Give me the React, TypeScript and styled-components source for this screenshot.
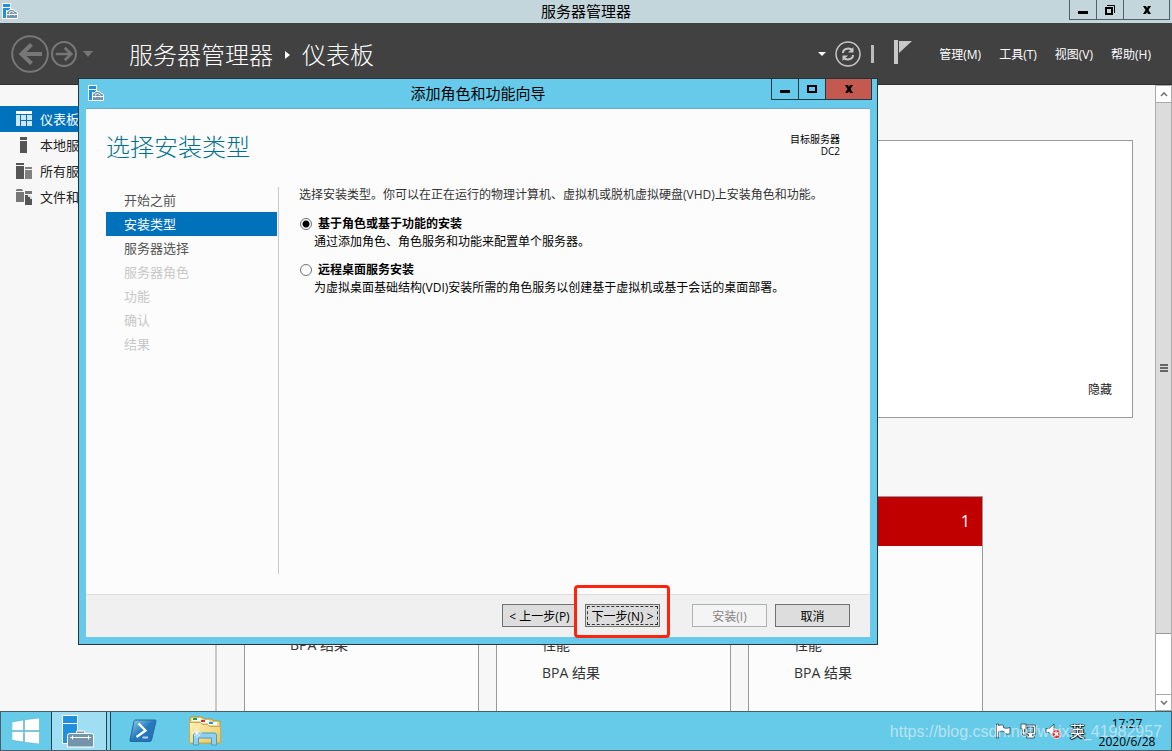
import React from "react";
import styled, { createGlobalStyle, css } from "styled-components";

const uiFont = `"Open Sans", "Noto Sans CJK SC", sans-serif`;

const GlobalStyle = createGlobalStyle`
  * { box-sizing: border-box; }
  body { margin: 0; font-family: ${uiFont}; font-size: 12px; color: #000; overflow: hidden; }
  button, input { font-family: inherit; margin: 0; }
  h1, h2, p, ul { margin: 0; padding: 0; font-weight: 400; }
  ul { list-style: none; }
`;

const Desktop = styled.div`
  position: relative;
  display: flex;
  flex-direction: column;
  height: 100vh;
  background: #f7f7f7;
  overflow: hidden;
`;

/* ---------- window chrome ---------- */

const TitleBar = styled.header`
  display: grid;
  grid-template-columns: 1fr auto 1fr;
  height: 23px;
  flex: none;
  padding: 0 2px;
  background: #c3d6dc;
`;

const WindowTitle = styled.h1`
  font-size: 15px;
  line-height: 22px;
`;

const TitleIcon = styled.span`
  display: flex;
  align-items: flex-start;
  padding-top: 3px;
`;

const Controls = styled.div`
  display: flex;
  justify-content: flex-end;
`;

const ControlButton = styled.button<{ $wide?: boolean; $tone?: "frame" | "danger" }>`
  display: flex;
  align-items: center;
  justify-content: center;
  width: ${(p) => (p.$wide ? 47 : 28)}px;
  height: ${(p) => (p.$tone ? 21 : 20)}px;
  padding: 0;
  margin-left: -1px;
  border: 1px solid ${(p) => (p.$tone ? "#1f3a46" : "#53606b")};
  border-top: 0;
  background: ${(p) => (p.$tone === "danger" ? "#c3594f" : "transparent")};
`;

const NavBar = styled.div`
  display: flex;
  align-items: center;
  justify-content: space-between;
  height: 62px;
  flex: none;
  padding: 0 21px 0 11px;
  background: #414141;
  border-bottom: 1px solid #2f2f2f;
  color: #fff;
`;

const NavGroup = styled.div`
  display: flex;
  align-items: center;
`;

const IconButton = styled.button<{ $gap?: number }>`
  display: flex;
  padding: 0;
  margin-right: ${(p) => p.$gap ?? 0}px;
  border: 0;
  background: none;
`;

const Breadcrumb = styled.div`
  display: flex;
  align-items: center;
  gap: 12px;
  padding-top: 2px;
  font-size: 24px;
  line-height: 36px;
  font-weight: 300;
`;

const MenuBar = styled.nav`
  display: flex;
  gap: 18px;
  padding-top: 2px;
`;

const MenuButton = styled.button`
  padding: 0;
  border: 0;
  background: none;
  color: #fff;
  font-size: 12px;
  line-height: 18px;
  white-space: nowrap;
`;

/* ---------- dashboard behind the wizard ---------- */

const Body = styled.div`
  display: flex;
  flex: 1;
  min-height: 0;
`;

const Sidebar = styled.nav`
  width: 217px;
  flex: none;
  padding-top: 21px;
  border-right: 2px solid #c8c8c8;
`;

const SideLink = styled.a<{ $active?: boolean }>`
  display: flex;
  align-items: center;
  gap: 7px;
  height: 26px;
  padding-left: 16px;
  font-size: 13px;
  text-decoration: none;
  color: ${(p) => (p.$active ? "#fff" : "#222")};
  background: ${(p) => (p.$active ? "#0072bc" : "transparent")};
`;

const SideLabel = styled.span`
  padding-bottom: 2px;
`;

const Content = styled.main`
  display: flex;
  flex-direction: column;
  flex: 1;
  min-width: 0;
  gap: 78px;
  padding: 55px 22px 0 27px;
  overflow: hidden;
`;

const WelcomePanel = styled.section`
  display: flex;
  justify-content: flex-end;
  align-items: flex-end;
  height: 278px;
  flex: none;
  padding: 18px 20px;
  background: #fff;
  border: 1px solid #999;
`;

const HideButton = styled.button`
  padding: 0;
  border: 0;
  background: none;
  font-size: 12px;
  line-height: 18px;
  color: #222;
`;

const Tiles = styled.div`
  display: flex;
  gap: 17px;
  flex: 1;
`;

const Tile = styled.section`
  width: 235px;
  flex: none;
  background: #fcfcfc;
  border: 1px solid #999;
  border-bottom: 0;
`;

const TileHead = styled.div`
  height: 49px;
  padding-right: 12px;
  text-align: right;
  font-size: 16px;
  line-height: 49px;
  color: #fff;
  background: #c00000;
`;

const TileRows = styled.ul`
  padding: 85px 0 0 45px;
  font-size: 14px;
  line-height: 28px;
  color: #333;
`;

const ScrollTrack = styled.div`
  display: flex;
  flex-direction: column;
  width: 17px;
  flex: none;
  border: 1px solid #ababab;
  border-bottom: 0;
  background: #fff;
`;

const ScrollButton = styled.button`
  display: flex;
  align-items: center;
  justify-content: center;
  height: 17px;
  padding: 0;
  border: 0;
  background: #fff;
  border-bottom: 1px solid #ababab;
  &:last-child { border-top: 1px solid #ababab; }
`;

const ScrollThumb = styled.div`
  display: flex;
  flex-direction: column;
  align-items: center;
  justify-content: center;
  gap: 1px;
  flex: 531;
  background: #dcdcdc;
  border-bottom: 1px solid #999;
`;

const Grip = styled.i`
  width: 8px;
  height: 2px;
  background: #666;
`;

const ScrollRest = styled.div`
  flex: 60;
`;

/* ---------- wizard ---------- */

const Wizard = styled.section`
  position: absolute;
  left: 78px;
  top: 78px;
  width: 800px;
  height: 567px;
  display: flex;
  flex-direction: column;
  padding: 0 7px 7px;
  background: #68caeb;
  border: 1px solid #28333a;
`;

const WizardBar = styled.header`
  display: grid;
  grid-template-columns: 1fr auto 1fr;
  height: 29px;
  flex: none;
`;

const WizardControls = styled(Controls)`
  margin-right: -2px;
`;

const WizardIcon = styled(TitleIcon)`
  padding: 6px 0 0 2px;
`;

const WizardTitle = styled.h2`
  font-size: 15px;
  line-height: 28px;
`;

const WizardPage = styled.div`
  display: flex;
  flex-direction: column;
  flex: 1;
  min-height: 0;
  background: #fcfcfc;
  border-top: 1px solid #78a9c9;
`;

const WizardHead = styled.div`
  display: flex;
  justify-content: space-between;
  height: 78px;
  padding: 20px 30px 0 20px;
`;

const PageTitle = styled.h2`
  font-size: 24px;
  line-height: 36px;
  font-weight: 300;
  color: #00708f;
`;

const Target = styled.div`
  padding-top: 4px;
  text-align: right;
  font-size: 10px;
  line-height: 12px;
`;

const WizardBody = styled.div`
  display: flex;
  flex: 1;
  padding: 0 20px 20px;
`;

const Steps = styled.ul`
  width: 173px;
  flex: none;
  padding-right: 1px;
  border-right: 1px solid #c8c8c8;
  padding-top: 1px;
`;

const Step = styled.li<{ $state?: "active" | "disabled" }>`
  height: 24px;
  padding-left: 18px;
  font-size: 13px;
  line-height: 24px;
  color: #555;
  ${(p) => p.$state === "active" && css`color: #fff; background: #0072bc;`}
  ${(p) => p.$state === "disabled" && css`color: #c8c8c8;`}
`;

const Form = styled.div`
  padding-left: 20px;
  line-height: 18px;
`;

const Intro = styled.p`
  margin-bottom: 12px;
  line-height: 16px;
  color: #333;
`;

const Option = styled.div`
  margin-bottom: 10px;
`;

const OptionLabel = styled.label`
  display: flex;
  align-items: center;
  gap: 6px;
  padding-left: 1px;
  font-weight: 700;
`;

const Radio = styled.input`
  appearance: none;
  width: 12px;
  height: 12px;
  border: 1px solid #707070;
  border-radius: 50%;
  background: #fff;
  &:checked { background: radial-gradient(circle, #000 0 3px, #fff 4px); }
`;

const OptionText = styled.p`
  padding-left: 15px;
`;

const Footer = styled.footer`
  display: flex;
  justify-content: flex-end;
  height: 43px;
  flex: none;
  padding: 9px 20px 0 0;
  background: #f0f0f0;
  border-top: 1px solid #dcdcdc;
`;

const PushButton = styled.button<{ $gap?: number; $focused?: boolean }>`
  width: 75px;
  height: 23px;
  padding: 2px 0 0;
  margin-left: ${(p) => p.$gap ?? 8}px;
  border: 1px solid #707070;
  background: #ddd;
  color: #000;
  font-size: 12px;
  line-height: 18px;
  white-space: nowrap;
  ${(p) => p.$focused && css`outline: 1px dashed #333; outline-offset: -3px;`}
  &:disabled { color: #838383; border-color: #adb2b5; background: #f4f4f4; }
`;

const Highlight = styled.div`
  position: absolute;
  right: 207px;
  bottom: 6px;
  width: 96px;
  height: 53px;
  border: 3px solid #ff2410;
  border-radius: 4px;
  pointer-events: none;
`;

/* ---------- taskbar ---------- */

const Taskbar = styled.footer`
  position: relative;
  display: flex;
  justify-content: space-between;
  height: 40px;
  flex: none;
  background: #66cae9;
  border: 1px solid #4d5d66;
`;

const TaskGroup = styled.div`
  display: flex;
`;

const TaskButton = styled.button<{ $width: number; $active?: boolean }>`
  display: flex;
  align-items: center;
  justify-content: center;
  width: ${(p) => p.$width}px;
  padding: 0;
  border: 0;
  background: transparent;
  ${(p) =>
    p.$active &&
    css`
      padding-right: 5px;
      background: linear-gradient(90deg, #a0def3 54px, #23444f 54px 55px, #8dd6ef 55px);
      border: solid #23444f;
      border-width: 0 1px;
    `}
`;

const Tray = styled.div`
  display: flex;
  align-items: center;
  gap: 8px;
  padding-right: 14px;
`;

const Language = styled.span`
  font-size: 15px;
  line-height: 20px;
  color: #fff;
  text-shadow: 0 0 1px #000, 1px 0 1px #000, 0 1px 1px #000, -1px 0 1px #000;
`;

const Clock = styled.time`
  width: 60px;
  margin-left: 4px;
  padding-top: 3px;
  text-align: center;
  white-space: nowrap;
  font-size: 12px;
  line-height: 18px;
`;

const Watermark = styled.span`
  position: absolute;
  right: 9px;
  top: 10px;
  font-family: "Liberation Sans", sans-serif;
  font-size: 16px;
  line-height: 20px;
  color: rgba(235, 245, 250, 0.62);
  white-space: nowrap;
`;

/* ---------- drawings ---------- */

const ServerManagerIcon = ({ size = 16 }: { size?: number }) => (
  <svg width={size} height={size} viewBox="0 0 16 16" aria-hidden="true">
    <path d="M0 0h9v6h-4v10H0z" fill="#fff" />
    <path d="M1 1h7v3H1zM1 5h7v2H4v8H1z" fill="#1f8fdf" />
    <path d="M4.500 9.500l2-1.500 1-1.500h4l1 1.500 3 1.500v6h-11z" fill="#7693ab" stroke="#fff" />
    <path d="M7 9.500q2.500-2 5 0M5 11.500h10M7.500 10.500v2M12.500 10.500v2" fill="none" stroke="#fff" />
  </svg>
);

const TaskServerIcon = () => (
  <svg width="33" height="33" viewBox="0 0 33 33" aria-hidden="true">
    <path d="M.5.500h15v28H.500z" fill="#1f8fdf" stroke="#fff" />
    <path d="M.5 8.500h15" stroke="#fff" />
    <path d="M14.500 18.500v-2.500h8v2.500h7q2 0 2 2v11.500h-26V20.500q0-2 2-2z" fill="#7494aa" stroke="#fff" strokeLinejoin="round" />
    <path d="M15 18.500h7M8 22.500h21M10.500 20.500v4M26.500 20.500v4" stroke="#fff" fill="none" />
  </svg>
);

const Minimise = () => (
  <svg width="14" height="14" viewBox="0 0 14 14" aria-hidden="true"><path d="M2 8h10v3H2z" /></svg>
);
const Maximise = () => (
  <svg width="14" height="14" viewBox="0 0 14 14" aria-hidden="true">
    <path d="M3 4h8v6H3z" fill="none" stroke="#000" strokeWidth="2" />
  </svg>
);
const Restore = () => (
  <svg width="14" height="14" viewBox="0 0 14 14" aria-hidden="true">
    <path d="M3 5h6v6H3z" fill="none" stroke="#000" strokeWidth="2" />
    <path d="M4 2.500h7.500V10" fill="none" stroke="#000" />
  </svg>
);
const Close = () => (
  <svg width="14" height="14" viewBox="0 0 14 14" aria-hidden="true">
    <path d="M3 3h3l1 2 1-2h3l-2.500 4 2.500 4H8L7 9l-1 2H3l2.500-4z" />
  </svg>
);

const RoundArrow = ({ size, flip }: { size: number; flip?: boolean }) => (
  <svg width={size} height={size} viewBox="0 0 38 38" fill="none" stroke="#777" aria-hidden="true">
    <circle cx="19" cy="19" r={flip ? 17.5 : 17.8} strokeWidth={flip ? 3 : 2} />
    {flip ? (
      <path d="M7 19h23M20 10l9.500 9-9.500 9" strokeWidth="4" />
    ) : (
      <path d="M31 19H10M20.500 9.500L10.500 19l10 9.500" strokeWidth="4" />
    )}
  </svg>
);

const Triangle = ({ w, h, fill }: { w: number; h: number; fill: string }) => (
  <svg width={w} height={h} viewBox="0 0 10 6" preserveAspectRatio="none" aria-hidden="true">
    <path d="M0 0h10L5 6z" fill={fill} />
  </svg>
);

const Refresh = () => (
  <svg width="26" height="26" viewBox="0 0 26 26" fill="none" stroke="#c8c8c8" aria-hidden="true">
    <circle cx="13" cy="13" r="12" strokeWidth="1.500" />
    <path d="M8 12c0-5 7-5.500 9.500-2.500M18 14c0 5-7 5.500-9.500 2.500" strokeWidth="2" />
    <path d="M18.500 6v5.500H13zM7.500 20v-5.500H13z" fill="#c8c8c8" stroke="none" />
  </svg>
);

const Chevron = ({ down }: { down?: boolean }) => (
  <svg width="8" height="6" viewBox="0 0 8 6" fill="none" stroke="#777" strokeWidth="1.600" aria-hidden="true">
    <path d={down ? "M1 1l3 3 3-3" : "M1 5l3-3 3 3"} />
  </svg>
);

const sideIcons = [
  <g key="a">
    <path d="M0 0h16v3H0z" fill="#fff" />
    <path d="M0 4h4v11H0zM5 4h5v5H5zM11 4h5v5h-5zM5 10h5v5H5zM11 10h5v5h-5z" fill="#cfe6f5" />
  </g>,
  <path key="b" d="M4 0h7v3H4zM4 4h7v12H4z" fill="#555" />,
  <g key="c">
    <path d="M0 0h8v2H0zM0 3h8v13H0z" fill="#555" />
    <path d="M9 4h7v2H9zM9 7h7v9H9z" fill="#808080" />
  </g>,
  <g key="d">
    <path d="M0 1l1-1h5l1 2h-7zM0 3h8v10H0zM9 2h7v3H9z" fill="#777" />
    <path d="M9 6h4l3 3v7H9z" fill="#555" />
    <path d="M12 6h2l2 2v2h-2V8h-2z" fill="#ddd" />
  </g>,
];

const StartLogo = () => (
  <svg width="28" height="26" viewBox="0 0 28 26" fill="#fff" stroke="#4aa6c3" strokeWidth=".5" aria-hidden="true">
    <path d="M0 4l11.500-2v10.500H0zM12.500 1.800L27.500 0v12.500h-15zM0 13.500h11.500V24L0 22.300zM12.500 13.500h15V26l-15-1.800z" />
  </svg>
);

const PowerShellIcon = () => (
  <svg width="28" height="24" viewBox="0 0 28 24" aria-hidden="true">
    <defs>
      <linearGradient id="ps" x1="0" y1="0" x2="1" y2="1">
        <stop offset="0" stopColor="#9bd4ee" />
        <stop offset=".5" stopColor="#2479bd" />
        <stop offset="1" stopColor="#2a6cc0" />
      </linearGradient>
    </defs>
    <path d="M6.500 1h19.500q1.200 0 1 1.200L22.500 21q-.4 1.500-2 1.500H2q-1.500 0-1-1.500L5 2.300Q5.300 1 6.500 1z" fill="url(#ps)" stroke="#216b9c" />
    <path d="M9.500 4.500l7 7-9 6.500" fill="none" stroke="#fff" strokeWidth="2.400" />
    <path d="M13.500 18.500H19" stroke="#b5d5ed" strokeWidth="2" />
  </svg>
);

const ExplorerIcon = () => (
  <svg width="34" height="30" viewBox="0 0 34 30" aria-hidden="true">
    <defs>
      <linearGradient id="folder" x1="0" y1="0" x2="1" y2="1">
        <stop offset="0" stopColor="#fff3b8" />
        <stop offset="1" stopColor="#e8c65a" />
      </linearGradient>
    </defs>
    <path d="M2 27V2q0-1 1-1h11l2 2h8l1 2h7v22z" fill="#efd98c" stroke="#bd9639" />
    <path d="M4 2h9v3H4z" fill="#fff" /><path d="M5 2h4v2H5z" fill="#18a528" />
    <path d="M12 4h9v3h-9z" fill="#fff" /><path d="M13 4h4v2h-4z" fill="#c73b28" />
    <path d="M20 6h9v3h-9z" fill="#fff" /><path d="M21 6h4v2h-4z" fill="#2293d8" />
    <path d="M1.500 6.500h11l2 2h5l2 2h11V27h-31z" fill="url(#folder)" stroke="#d0a84b" />
    <path d="M5.500 29V19q0-2 2-2h19q2 0 2 2v10h-5v-7h-13v7z" fill="#8fd0ee" stroke="#4a9cc9" />
    <path d="M9 12v10M4 17h10M6 14l6 6M12 14l-6 6" stroke="#fff" strokeWidth=".8" />
  </svg>
);

const TrayIcon = ({ kind }: { kind: "flag" | "net" | "sound" }) => (
  <svg width="17" height="16" viewBox="0 0 17 16" stroke="#243f4b" strokeWidth=".8" fill="#fff" aria-hidden="true">
    {kind === "flag" && <path d="M1.500 1h2v1.500c2-1 4-.5 5 .2v2c2 1 4 .5 6.500-.2v6c-2 1-4 .6-5.500-.3v-1.500c-2-.7-4-.5-6 0V15h-2z" />}
    {kind === "net" && (
      <>
        <path d="M5 2h10.500v9.500h-3V13h2v2h-8v-2h2v-1.500H5z" />
        <path d="M7 4h6.500v5.500H7z" fill="#5fb7d6" />
        <path d="M1 1h5v5H4.500v4H7v2H2.500V6H1z" />
      </>
    )}
    {kind === "sound" && (
      <>
        <path d="M1 5.500h3L9 1v13l-5-4.500H1z" />
        <circle cx="11.500" cy="11" r="4.500" fill="#d92c2c" stroke="#fff" />
        <path d="M9.700 9.200l3.600 3.600M13.300 9.200l-3.600 3.600" stroke="#fff" strokeWidth="1.400" />
      </>
    )}
  </svg>
);

/* ---------- page ---------- */

const sideItems = ["仪表板", "本地服务器", "所有服务器", "文件和存储服务"];
const menus = ["管理(M)", "工具(T)", "视图(V)", "帮助(H)"];
const steps: { label: string; state?: "active" | "disabled" }[] = [
  { label: "开始之前" },
  { label: "安装类型", state: "active" },
  { label: "服务器选择" },
  { label: "服务器角色", state: "disabled" },
  { label: "功能", state: "disabled" },
  { label: "确认", state: "disabled" },
  { label: "结果", state: "disabled" },
];
const options = [
  { id: "role", label: "基于角色或基于功能的安装", text: "通过添加角色、角色服务和功能来配置单个服务器。" },
  { id: "rds", label: "远程桌面服务安装", text: "为虚拟桌面基础结构(VDI)安装所需的角色服务以创建基于虚拟机或基于会话的桌面部署。" },
];
const tiles = [
  { id: 1, rows: ["BPA 结果"] },
  { id: 2, rows: ["性能", "BPA 结果"] },
  { id: 3, rows: ["性能", "BPA 结果"], count: 1 },
];

export default function App() {
  return (
    <Desktop>
      <GlobalStyle />
      <TitleBar>
        <TitleIcon><ServerManagerIcon /></TitleIcon>
        <WindowTitle>服务器管理器</WindowTitle>
        <Controls>
          <ControlButton aria-label="最小化"><Minimise /></ControlButton>
          <ControlButton aria-label="还原"><Restore /></ControlButton>
          <ControlButton aria-label="关闭" $wide><Close /></ControlButton>
        </Controls>
      </TitleBar>

      <NavBar>
        <NavGroup>
          <IconButton aria-label="后退" $gap={2}><RoundArrow size={38} /></IconButton>
          <IconButton aria-label="前进" $gap={6}><RoundArrow size={26} flip /></IconButton>
          <IconButton aria-label="历史记录" $gap={36}><Triangle w={10} h={6} fill="#777" /></IconButton>
          <Breadcrumb>
            <span>服务器管理器</span>
            <svg width="5" height="8" viewBox="0 0 5 8" aria-hidden="true"><path d="M0 0l5 4-5 4z" fill="#fff" /></svg>
            <span>仪表板</span>
          </Breadcrumb>
        </NavGroup>
        <NavGroup>
          <IconButton aria-label="更多" $gap={9}><Triangle w={8} h={4} fill="#fff" /></IconButton>
          <IconButton aria-label="刷新" $gap={10}><Refresh /></IconButton>
          <IconButton as="span" $gap={20}>
            <svg width="3" height="18" aria-hidden="true"><path d="M0 0h3v18H0z" fill="#bbb" /></svg>
          </IconButton>
          <IconButton aria-label="通知" $gap={27}>
            <svg width="18" height="28" viewBox="0 0 18 28" fill="#c8c8c8" aria-hidden="true">
              <path d="M0 0h4v24H0zM5 1h13L5 13z" />
            </svg>
          </IconButton>
          <MenuBar>
            {menus.map((m) => <MenuButton key={m}>{m}</MenuButton>)}
          </MenuBar>
        </NavGroup>
      </NavBar>

      <Body>
        <Sidebar>
          {sideItems.map((label, i) => (
            <SideLink key={label} href="#" $active={i === 0}>
              <svg width="17" height="16" viewBox="0 0 17 16" aria-hidden="true">{sideIcons[i]}</svg>
              <SideLabel>{label}</SideLabel>
            </SideLink>
          ))}
        </Sidebar>
        <Content>
          <WelcomePanel><HideButton>隐藏</HideButton></WelcomePanel>
          <Tiles>
            {tiles.map((t) => (
              <Tile key={t.id}>
                <TileHead>{t.count}</TileHead>
                <TileRows>{t.rows.map((r) => <li key={r}>{r}</li>)}</TileRows>
              </Tile>
            ))}
          </Tiles>
        </Content>
        <ScrollTrack>
          <ScrollButton aria-label="向上滚动"><Chevron /></ScrollButton>
          <ScrollThumb><Grip /><Grip /><Grip /></ScrollThumb>
          <ScrollRest />
          <ScrollButton aria-label="向下滚动"><Chevron down /></ScrollButton>
        </ScrollTrack>
      </Body>

      <Taskbar>
        <TaskGroup>
          <TaskButton $width={50} aria-label="开始"><StartLogo /></TaskButton>
          <TaskButton $width={60} $active aria-label="服务器管理器"><TaskServerIcon /></TaskButton>
          <TaskButton $width={64} aria-label="PowerShell"><PowerShellIcon /></TaskButton>
          <TaskButton $width={60} aria-label="文件资源管理器"><ExplorerIcon /></TaskButton>
        </TaskGroup>
        <Tray>
          <TrayIcon kind="flag" />
          <TrayIcon kind="net" />
          <TrayIcon kind="sound" />
          <Language>英</Language>
          <Clock>17:27<br />2020/6/28</Clock>
        </Tray>
        <Watermark>https://blog.csdn.net/weixin_41982957</Watermark>
      </Taskbar>

      <Wizard aria-label="添加角色和功能向导">
        <WizardBar>
          <WizardIcon><ServerManagerIcon /></WizardIcon>
          <WizardTitle>添加角色和功能向导</WizardTitle>
          <WizardControls>
            <ControlButton $tone="frame" aria-label="最小化"><Minimise /></ControlButton>
            <ControlButton $tone="frame" aria-label="最大化"><Maximise /></ControlButton>
            <ControlButton $tone="danger" $wide aria-label="关闭"><Close /></ControlButton>
          </WizardControls>
        </WizardBar>
        <WizardPage>
          <WizardHead>
            <PageTitle>选择安装类型</PageTitle>
            <Target>目标服务器<br />DC2</Target>
          </WizardHead>
          <WizardBody>
            <Steps>
              {steps.map((s) => <Step key={s.label} $state={s.state}>{s.label}</Step>)}
            </Steps>
            <Form>
              <Intro>选择安装类型。你可以在正在运行的物理计算机、虚拟机或脱机虚拟硬盘(VHD)上安装角色和功能。</Intro>
              {options.map((o, i) => (
                <Option key={o.id}>
                  <OptionLabel htmlFor={o.id}>
                    <Radio type="radio" name="install" id={o.id} defaultChecked={i === 0} />
                    {o.label}
                  </OptionLabel>
                  <OptionText>{o.text}</OptionText>
                </Option>
              ))}
            </Form>
          </WizardBody>
          <Footer>
            <PushButton>&lt; 上一步(P)</PushButton>
            <PushButton $focused>下一步(N) &gt;</PushButton>
            <PushButton $gap={32} disabled>安装(I)</PushButton>
            <PushButton>取消</PushButton>
          </Footer>
        </WizardPage>
        <Highlight />
      </Wizard>
    </Desktop>
  );
}
